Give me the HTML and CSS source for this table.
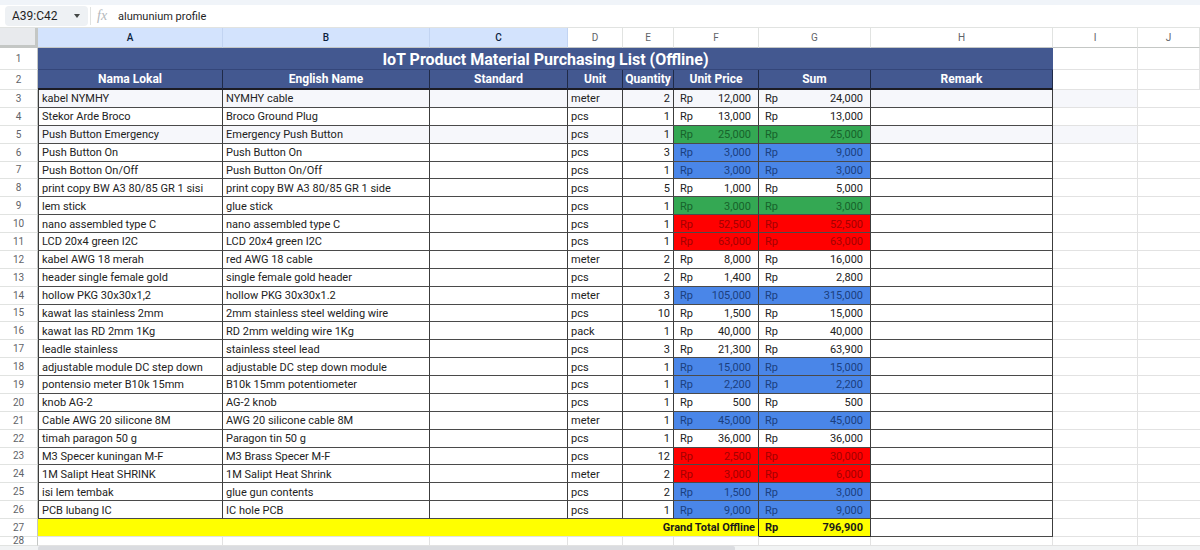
FILE: index.html
```html
<!DOCTYPE html>
<html>
<head>
<meta charset="utf-8">
<link rel="stylesheet" href="styles.css">
</head>
<body>
<div class="topbar">
  <div class="namebox"><span>A39:C42</span><span class="caret"></span></div>
  <div class="sep"></div>
  <div class="fx">fx</div>
  <div class="formula">alumunium profile</div>
</div>
<div class="sheet">
  <div class="corner"></div>
  <div class="ch sel">A</div><div class="ch sel">B</div><div class="ch sel">C</div><div class="ch">D</div><div class="ch">E</div><div class="ch">F</div><div class="ch">G</div><div class="ch">H</div><div class="ch">I</div><div class="ch">J</div>

  <div class="rn">1</div><div class="title">IoT Product Material Purchasing List (Offline)</div><div class="c"></div><div class="c"></div>

  <div class="rn">2</div><div class="hd">Nama Lokal</div><div class="hd">English Name</div><div class="hd">Standard</div><div class="hd">Unit</div><div class="hd">Quantity</div><div class="hd">Unit Price</div><div class="hd">Sum</div><div class="hd">Remark</div><div class="c"></div><div class="c"></div>

  <div class="row lt"><div class="rn">3</div><div class="c t a">kabel NYMHY</div><div class="c t">NYMHY cable</div><div class="c t"></div><div class="c t">meter</div><div class="c t n">2</div><div class="c t acc"><span>Rp</span><span>12,000</span></div><div class="c t acc"><span>Rp</span><span>24,000</span></div><div class="c t"></div><div class="c"></div><div class="c x"></div></div>
  <div class="row"><div class="rn">4</div><div class="c t a">Stekor Arde Broco</div><div class="c t">Broco Ground Plug</div><div class="c t"></div><div class="c t">pcs</div><div class="c t n">1</div><div class="c t acc"><span>Rp</span><span>13,000</span></div><div class="c t acc"><span>Rp</span><span>13,000</span></div><div class="c t"></div><div class="c"></div><div class="c x"></div></div>
  <div class="row lt"><div class="rn">5</div><div class="c t a">Push Button Emergency</div><div class="c t">Emergency Push Button</div><div class="c t"></div><div class="c t">pcs</div><div class="c t n">1</div><div class="c t acc g"><span>Rp</span><span>25,000</span></div><div class="c t acc g"><span>Rp</span><span>25,000</span></div><div class="c t"></div><div class="c"></div><div class="c x"></div></div>
  <div class="row"><div class="rn">6</div><div class="c t a">Push Button On</div><div class="c t">Push Button On</div><div class="c t"></div><div class="c t">pcs</div><div class="c t n">3</div><div class="c t acc b"><span>Rp</span><span>3,000</span></div><div class="c t acc b"><span>Rp</span><span>9,000</span></div><div class="c t"></div><div class="c"></div><div class="c x"></div></div>
  <div class="row"><div class="rn">7</div><div class="c t a">Push Botton On/Off</div><div class="c t">Push Button On/Off</div><div class="c t"></div><div class="c t">pcs</div><div class="c t n">1</div><div class="c t acc b"><span>Rp</span><span>3,000</span></div><div class="c t acc b"><span>Rp</span><span>3,000</span></div><div class="c t"></div><div class="c"></div><div class="c x"></div></div>
  <div class="row"><div class="rn">8</div><div class="c t a">print copy BW A3 80/85 GR 1 sisi</div><div class="c t">print copy BW A3 80/85 GR 1 side</div><div class="c t"></div><div class="c t">pcs</div><div class="c t n">5</div><div class="c t acc"><span>Rp</span><span>1,000</span></div><div class="c t acc"><span>Rp</span><span>5,000</span></div><div class="c t"></div><div class="c"></div><div class="c x"></div></div>
  <div class="row"><div class="rn">9</div><div class="c t a">lem stick</div><div class="c t">glue stick</div><div class="c t"></div><div class="c t">pcs</div><div class="c t n">1</div><div class="c t acc g"><span>Rp</span><span>3,000</span></div><div class="c t acc g"><span>Rp</span><span>3,000</span></div><div class="c t"></div><div class="c"></div><div class="c x"></div></div>
  <div class="row"><div class="rn">10</div><div class="c t a">nano assembled type C</div><div class="c t">nano assembled type C</div><div class="c t"></div><div class="c t">pcs</div><div class="c t n">1</div><div class="c t acc r"><span>Rp</span><span>52,500</span></div><div class="c t acc r"><span>Rp</span><span>52,500</span></div><div class="c t"></div><div class="c"></div><div class="c x"></div></div>
  <div class="row"><div class="rn">11</div><div class="c t a">LCD 20x4 green I2C</div><div class="c t">LCD 20x4 green I2C</div><div class="c t"></div><div class="c t">pcs</div><div class="c t n">1</div><div class="c t acc r"><span>Rp</span><span>63,000</span></div><div class="c t acc r"><span>Rp</span><span>63,000</span></div><div class="c t"></div><div class="c"></div><div class="c x"></div></div>
  <div class="row"><div class="rn">12</div><div class="c t a">kabel AWG 18 merah</div><div class="c t">red AWG 18 cable</div><div class="c t"></div><div class="c t">meter</div><div class="c t n">2</div><div class="c t acc"><span>Rp</span><span>8,000</span></div><div class="c t acc"><span>Rp</span><span>16,000</span></div><div class="c t"></div><div class="c"></div><div class="c x"></div></div>
  <div class="row"><div class="rn">13</div><div class="c t a">header single female gold</div><div class="c t">single female gold header</div><div class="c t"></div><div class="c t">pcs</div><div class="c t n">2</div><div class="c t acc"><span>Rp</span><span>1,400</span></div><div class="c t acc"><span>Rp</span><span>2,800</span></div><div class="c t"></div><div class="c"></div><div class="c x"></div></div>
  <div class="row"><div class="rn">14</div><div class="c t a">hollow PKG 30x30x1,2</div><div class="c t">hollow PKG 30x30x1.2</div><div class="c t"></div><div class="c t">meter</div><div class="c t n">3</div><div class="c t acc b"><span>Rp</span><span>105,000</span></div><div class="c t acc b"><span>Rp</span><span>315,000</span></div><div class="c t"></div><div class="c"></div><div class="c x"></div></div>
  <div class="row"><div class="rn">15</div><div class="c t a">kawat las stainless 2mm</div><div class="c t">2mm stainless steel welding wire</div><div class="c t"></div><div class="c t">pcs</div><div class="c t n">10</div><div class="c t acc"><span>Rp</span><span>1,500</span></div><div class="c t acc"><span>Rp</span><span>15,000</span></div><div class="c t"></div><div class="c"></div><div class="c x"></div></div>
  <div class="row"><div class="rn">16</div><div class="c t a">kawat las RD 2mm 1Kg</div><div class="c t">RD 2mm welding wire 1Kg</div><div class="c t"></div><div class="c t">pack</div><div class="c t n">1</div><div class="c t acc"><span>Rp</span><span>40,000</span></div><div class="c t acc"><span>Rp</span><span>40,000</span></div><div class="c t"></div><div class="c"></div><div class="c x"></div></div>
  <div class="row"><div class="rn">17</div><div class="c t a">leadle stainless</div><div class="c t">stainless steel lead</div><div class="c t"></div><div class="c t">pcs</div><div class="c t n">3</div><div class="c t acc"><span>Rp</span><span>21,300</span></div><div class="c t acc"><span>Rp</span><span>63,900</span></div><div class="c t"></div><div class="c"></div><div class="c x"></div></div>
  <div class="row"><div class="rn">18</div><div class="c t a">adjustable module DC step down</div><div class="c t">adjustable DC step down module</div><div class="c t"></div><div class="c t">pcs</div><div class="c t n">1</div><div class="c t acc b"><span>Rp</span><span>15,000</span></div><div class="c t acc b"><span>Rp</span><span>15,000</span></div><div class="c t"></div><div class="c"></div><div class="c x"></div></div>
  <div class="row"><div class="rn">19</div><div class="c t a">pontensio meter B10k 15mm</div><div class="c t">B10k 15mm potentiometer</div><div class="c t"></div><div class="c t">pcs</div><div class="c t n">1</div><div class="c t acc b"><span>Rp</span><span>2,200</span></div><div class="c t acc b"><span>Rp</span><span>2,200</span></div><div class="c t"></div><div class="c"></div><div class="c x"></div></div>
  <div class="row"><div class="rn">20</div><div class="c t a">knob AG-2</div><div class="c t">AG-2 knob</div><div class="c t"></div><div class="c t">pcs</div><div class="c t n">1</div><div class="c t acc"><span>Rp</span><span>500</span></div><div class="c t acc"><span>Rp</span><span>500</span></div><div class="c t"></div><div class="c"></div><div class="c x"></div></div>
  <div class="row"><div class="rn">21</div><div class="c t a">Cable AWG 20 silicone 8M</div><div class="c t">AWG 20 silicone cable 8M</div><div class="c t"></div><div class="c t">meter</div><div class="c t n">1</div><div class="c t acc b"><span>Rp</span><span>45,000</span></div><div class="c t acc b"><span>Rp</span><span>45,000</span></div><div class="c t"></div><div class="c"></div><div class="c x"></div></div>
  <div class="row"><div class="rn">22</div><div class="c t a">timah paragon 50 g</div><div class="c t">Paragon tin 50 g</div><div class="c t"></div><div class="c t">pcs</div><div class="c t n">1</div><div class="c t acc"><span>Rp</span><span>36,000</span></div><div class="c t acc"><span>Rp</span><span>36,000</span></div><div class="c t"></div><div class="c"></div><div class="c x"></div></div>
  <div class="row"><div class="rn">23</div><div class="c t a">M3 Specer kuningan M-F</div><div class="c t">M3 Brass Specer M-F</div><div class="c t"></div><div class="c t">pcs</div><div class="c t n">12</div><div class="c t acc r"><span>Rp</span><span>2,500</span></div><div class="c t acc r"><span>Rp</span><span>30,000</span></div><div class="c t"></div><div class="c"></div><div class="c x"></div></div>
  <div class="row"><div class="rn">24</div><div class="c t a">1M Salipt Heat SHRINK</div><div class="c t">1M Salipt Heat Shrink</div><div class="c t"></div><div class="c t">meter</div><div class="c t n">2</div><div class="c t acc r"><span>Rp</span><span>3,000</span></div><div class="c t acc r"><span>Rp</span><span>6,000</span></div><div class="c t"></div><div class="c"></div><div class="c x"></div></div>
  <div class="row"><div class="rn">25</div><div class="c t a">isi lem tembak</div><div class="c t">glue gun contents</div><div class="c t"></div><div class="c t">pcs</div><div class="c t n">2</div><div class="c t acc b"><span>Rp</span><span>1,500</span></div><div class="c t acc b"><span>Rp</span><span>3,000</span></div><div class="c t"></div><div class="c"></div><div class="c x"></div></div>
  <div class="row"><div class="rn">26</div><div class="c t a">PCB lubang IC</div><div class="c t">IC hole PCB</div><div class="c t"></div><div class="c t">pcs</div><div class="c t n">1</div><div class="c t acc b"><span>Rp</span><span>9,000</span></div><div class="c t acc b"><span>Rp</span><span>9,000</span></div><div class="c t"></div><div class="c"></div><div class="c x"></div></div>

  <div class="rn">27</div><div class="gt-label">Grand Total Offline</div><div class="c t acc gt"><span>Rp</span><span>796,900</span></div><div class="c t"></div><div class="c"></div><div class="c x"></div>

  <div class="rn">28</div><div class="c"></div><div class="c"></div><div class="c"></div><div class="c"></div><div class="c"></div><div class="c"></div><div class="c"></div><div class="c"></div><div class="c"></div><div class="c x"></div>
</div>
<div class="hscroll"><div class="thumb"></div></div>
</body>
</html>
```

FILE: styles.css
```css
html, body {
  margin: 0;
  padding: 0;
}
body {
  width: 1200px;
  height: 550px;
  overflow: hidden;
  background: #fff;
  font-family: Roboto, "Liberation Sans", Arial, sans-serif;
  color: #1f1f1f;
}

/* formula bar */
.topbar {
  height: 28px;
  box-sizing: border-box;
  border-top: 5px solid #f0f4f9;
  border-bottom: 1px solid #e1e3e1;
  display: flex;
  align-items: center;
  padding-left: 5px;
  background: #fff;
}
.namebox {
  width: 83px;
  height: 20px;
  box-sizing: border-box;
  background: #eef1f4;
  border-radius: 4px;
  display: flex;
  align-items: center;
  padding-left: 7px;
  font-size: 12px;
  color: #1f1f1f;
}
.caret {
  margin-left: auto;
  margin-right: 8px;
  width: 0;
  height: 0;
  border-left: 3.5px solid transparent;
  border-right: 3.5px solid transparent;
  border-top: 4px solid #444746;
}
.sep {
  width: 1px;
  height: 18px;
  background: #e1e3e1;
  margin: 0 6px 0 2px;
}
.fx {
  font-family: "Liberation Serif", "DejaVu Serif", serif;
  font-style: italic;
  font-size: 14px;
  color: #b4b8bc;
  width: 16px;
}
.formula {
  margin-left: 5px;
  font-size: 11px;
  color: #1f1f1f;
}

/* sheet grid */
.sheet {
  display: grid;
  grid-template-columns: 38px 185px 207px 138px 55px 51px 85px 112px 182px 85px 1fr;
  grid-template-rows: 20px 22px 20px repeat(25, 17.875px) 9px;
}
.row {
  display: contents;
}
.corner {
  background: #e8eaed;
  border-right: 3px solid #c4c7c5;
  border-bottom: 3px solid #c4c7c5;
  box-sizing: border-box;
}
.ch {
  display: flex;
  align-items: center;
  justify-content: center;
  font-size: 10px;
  color: #5f6368;
  border-right: 1px solid #e1e3e1;
  border-bottom: 1px solid #c4c7c5;
  box-sizing: border-box;
  background: #fff;
}
.ch.sel {
  background: #d3e3fd;
  color: #0b1f3f;
  font-weight: 500;
  border-right-color: #c2d4f2;
}
.rn {
  display: flex;
  align-items: center;
  justify-content: center;
  font-size: 10px;
  color: #5f6368;
  border-right: 1px solid #c4c7c5;
  border-bottom: 1px solid #e1e3e1;
  box-sizing: border-box;
  background: #fff;
}
.c {
  box-sizing: border-box;
  border-right: 1px solid #e2e2e2;
  border-bottom: 1px solid #e2e2e2;
  font-size: 11px;
  color: #222;
  display: flex;
  align-items: center;
  padding: 1px 3px 0;
  white-space: nowrap;
  overflow: hidden;
}
.c.x {
  border-right: none;
}
.c.t {
  border-right-color: #3c3c3c;
  border-bottom-color: #4a4a4a;
}
.c.a {
  border-left: 1px solid #3c3c3c;
}
.row.lt > .c:not(.x) {
  background: #f6f7fb;
}
.c.n {
  justify-content: flex-end;
}
.c.acc {
  justify-content: space-between;
  padding: 1px 7px 0 6px;
}
.row > .c.acc.g {
  background: #34a853;
  color: #17632b;
}
.row > .c.acc.b {
  background: #4a86e8;
  color: #1b3f7e;
}
.row > .c.acc.r {
  background: #ff0000;
  color: #a30000;
}

/* header rows */
.title {
  grid-column: span 8;
  background: #435890;
  color: #fff;
  font-weight: 700;
  font-size: 16px;
  display: flex;
  align-items: center;
  justify-content: center;
  padding-top: 1px;
  border-bottom: 1px solid #34467a;
  box-sizing: border-box;
}
.hd {
  background: #435890;
  color: #fff;
  font-weight: 700;
  font-size: 12px;
  display: flex;
  align-items: center;
  justify-content: center;
  border-right: 1px solid #1f2a48;
  border-bottom: 2px solid #1c1c24;
  box-sizing: border-box;
  white-space: nowrap;
}

/* grand total */
.gt-label {
  grid-column: span 6;
  background: #ffff00;
  color: #1a1a1a;
  font-weight: 700;
  font-size: 11px;
  display: flex;
  align-items: center;
  justify-content: flex-end;
  padding: 1px 3px 0 0;
  border-right: 1px solid #222;
  border-bottom: 1px solid #e2e2e2;
  box-sizing: border-box;
}
.c.gt {
  background: #ffff00;
  font-weight: 700;
  color: #1a1a1a;
  border-bottom-color: #222;
}

/* scrollbar */
.hscroll {
  height: 5px;
  background: #f1f3f4;
  display: flex;
}
.thumb {
  margin-left: 38px;
  width: 697px;
  height: 5px;
  background: #dadce0;
  border-radius: 2px;
}
```
